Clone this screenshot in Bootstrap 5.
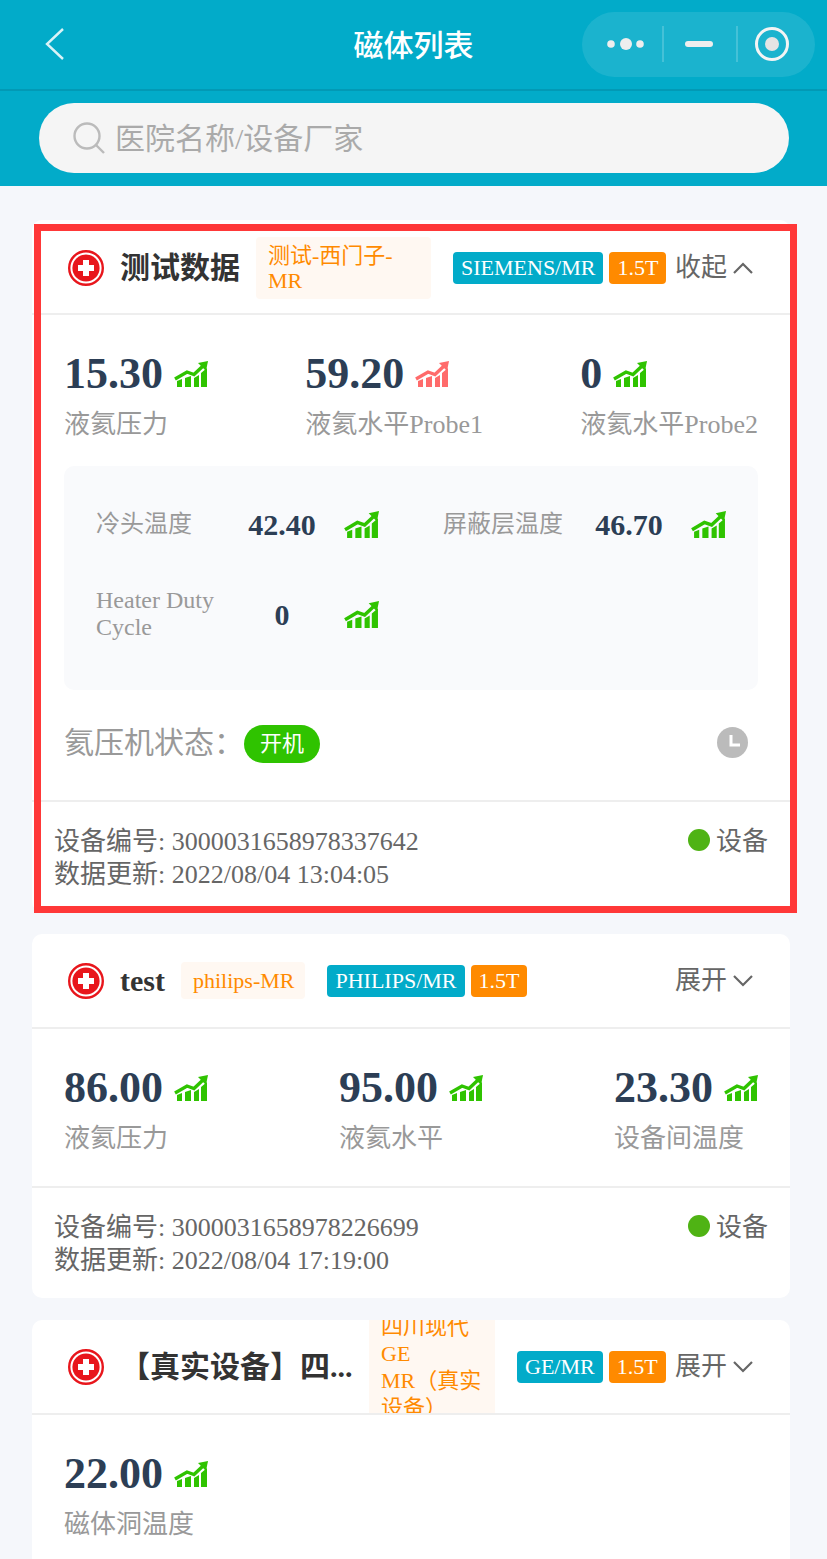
<!DOCTYPE html>
<html lang="zh-CN">
<head>
  <meta charset="UTF-8" />
  <meta name="viewport" content="width=device-width, initial-scale=1" />
  <title>磁体列表</title>
  <link href="https://cdn.jsdelivr.net/npm/bootstrap@5.3.2/dist/css/bootstrap.min.css" rel="stylesheet" />
  <style>
    html, body { height: 1559px; overflow: hidden; }
    body { background: #f5f7fb; font-family: "Liberation Serif", "Noto Sans CJK SC", serif; color: #333; position: relative; }
    .top-bar { height: 91px; background: #02abc9; border-bottom: 2px solid #0299b5; position: relative; }
    .top-title { color: #fff; font-size: 30px; line-height: 40px; font-weight: 500; padding-top: 26px; text-align: center; }
    .back-ico { position: absolute; left: 44px; top: 27px; }
    .capsule { position: absolute; left: 582px; top: 12px; width: 233px; height: 65px; border-radius: 33px; background: rgba(255,255,255,.1); }
    .search-band { background: #02abc9; height: 95px; padding: 12px 38px 0 39px; }
    .search-pill { height: 70px; background: #f5f5f5; border-radius: 35px; padding-left: 34px; gap: 10px; color: #aaa; font-size: 30px; }
    .list-wrap { padding: 34px 37px 0 32px; }
    .mag-card { background: #fff; border-radius: 10px; margin-bottom: 22px; }
    .mag-head { height: 95px; border-bottom: 2px solid #eee; padding: 0 37px 0 36px; overflow: hidden; }
    .head-first { padding-top: 2px; }
    .med-ico { width: 36px; height: 36px; flex: none; margin-right: 16px; }
    .mag-title { font-size: 30px; font-weight: 700; line-height: 40px; margin-right: 16px; flex: none; color: #333; white-space: nowrap; }
    .mag-title.cut { width: 233px; }
    .mag-tag { background: #fff8f2; color: #ff8a00; font-size: 22px; line-height: 25px; padding: 6px 11px 6px 12px; border-radius: 4px; flex: none; margin-right: 22px; }
    .tag-wide { width: 175px; }
    .tag-tall { width: 126px; line-height: 27px; padding-top: 0; padding-bottom: 0; }
    .type-pill { color: #fff; font-size: 22px; line-height: 32px; padding: 0 8px; border-radius: 4px; flex: none; }
    .type-blue { background: #02abc9; margin-right: 6px; }
    .type-orange { background: #ff8a00; }
    .fold-btn { color: #666; font-size: 26px; line-height: 34px; margin-left: auto; gap: 6px; flex: none; }
    .metrics { padding: 32px 32px 29px; }
    .metric-val { font-size: 44px; font-weight: 700; line-height: 54px; color: #2c3e55; gap: 11px; }
    .metric-lbl { font-size: 26px; line-height: 36px; color: #999; margin-top: 6px; }
    .trend-ok { color: #2fc300; flex: none; }
    .trend-warn { color: #ff6b6b; flex: none; }
    .sub-box { margin: -6px 32px 0; background: #f9fafc; border-radius: 10px; padding: 13px 0 31px 32px; display: grid; grid-template-columns: 347px 314px; grid-auto-rows: 90px; }
    .sub-lbl { width: 130px; font-size: 24px; line-height: 27px; color: #999; flex: none; }
    .sub-val { width: 112px; text-align: center; font-size: 30px; font-weight: 700; color: #2c3e55; flex: none; }
    .sub-ico { margin-left: 6px; }
    .state-row { height: 110px; padding: 0 42px 6px 32px; font-size: 30px; color: #999; }
    .state-pill { background: #2fc300; color: #fff; font-size: 22px; line-height: 38px; width: 76px; border-radius: 19px; text-align: center; margin-top: 4px; }
    .mag-foot { border-top: 2px solid #eee; padding: 23px 22px 21px; font-size: 26px; line-height: 33px; color: #666; }
    .dot-on { width: 22px; height: 22px; border-radius: 50%; background: #4fb314; flex: none; margin-top: 4px; }
    .dev-state { gap: 6px; }
    .red-frame { position: absolute; left: 34px; top: 224px; width: 763px; height: 689px; border: 7px solid #ff3838; pointer-events: none; }
  </style>
</head>
<body>
  <svg width="0" height="0" class="d-block position-absolute">
    <defs>
      <symbol id="trend" viewBox="0 0 34 26">
        <path d="M1 18 L13 11 L20 13.5 L29 5" fill="none" stroke="currentColor" stroke-width="3.4"/>
        <path d="M24 2 L34 0 L32 10 Z" fill="currentColor"/>
        <path d="M3 26 V20 L8 18 V26 Z M11 26 V17 L17 15 V26 Z M20 26 V17 L25 14 V26 Z M27 26 V12 L33 7 V26 Z" fill="currentColor"/>
      </symbol>
      <symbol id="med" viewBox="0 0 36 36">
        <circle cx="18" cy="18" r="16.8" fill="none" stroke="#e8161c" stroke-width="2.4"/>
        <circle cx="18" cy="18" r="13.6" fill="#e8161c"/>
        <path d="M15 10 H21 V15 H26 V21 H21 V26 H15 V21 H10 V15 H15 Z" fill="#fff"/>
      </symbol>
    </defs>
  </svg>

  <div class="top-bar">
    <svg class="back-ico" width="22" height="34" viewBox="0 0 22 34"><path d="M19 2 L3 17 L19 32" fill="none" stroke="#fff" stroke-opacity=".85" stroke-width="2.4"/></svg>
    <div class="top-title">磁体列表</div>
    <div class="capsule">
      <svg width="233" height="65" viewBox="0 0 233 65">
        <circle cx="29" cy="32" r="3.8" fill="#eee"/><circle cx="44" cy="32" r="6" fill="#eee"/><circle cx="58" cy="32" r="3.8" fill="#eee"/>
        <path d="M81 14 V50 M155 14 V50" stroke="#fff" stroke-opacity=".25" stroke-width="1.5"/>
        <rect x="103" y="29" width="28" height="6" rx="3" fill="#eee"/>
        <circle cx="190" cy="32" r="15.5" fill="none" stroke="#f4f4f4" stroke-width="3"/><circle cx="190" cy="32" r="7" fill="#e4e4e4"/>
      </svg>
    </div>
  </div>
  <div class="search-band">
    <div class="search-pill d-flex align-items-center">
      <svg width="32" height="32" viewBox="0 0 32 32"><circle cx="14" cy="14" r="12.5" fill="none" stroke="#bbb" stroke-width="2.4"/><path d="M23 23 L31 31" stroke="#bbb" stroke-width="2.4"/></svg>
      <span>医院名称/设备厂家</span>
    </div>
  </div>

  <div class="list-wrap">
    <div class="mag-card">
      <div class="mag-head head-first d-flex align-items-center">
        <svg class="med-ico"><use href="#med"/></svg>
        <div class="mag-title">测试数据</div>
        <div class="mag-tag tag-wide">测试-西门子-MR</div>
        <div class="type-pill type-blue">SIEMENS/MR</div>
        <div class="type-pill type-orange">1.5T</div>
        <div class="fold-btn d-flex align-items-center">收起
          <svg width="20" height="12" viewBox="0 0 20 12"><path d="M1 11 L10 2 L19 11" fill="none" stroke="#666" stroke-width="2.2"/></svg>
        </div>
      </div>
      <div class="metrics d-flex justify-content-between">
        <div>
          <div class="metric-val d-flex align-items-center">15.30 <svg class="trend-ok" width="34" height="26"><use href="#trend"/></svg></div>
          <div class="metric-lbl">液氦压力</div>
        </div>
        <div>
          <div class="metric-val d-flex align-items-center">59.20 <svg class="trend-warn" width="34" height="26"><use href="#trend"/></svg></div>
          <div class="metric-lbl">液氦水平Probe1</div>
        </div>
        <div>
          <div class="metric-val d-flex align-items-center">0 <svg class="trend-ok" width="34" height="26"><use href="#trend"/></svg></div>
          <div class="metric-lbl">液氦水平Probe2</div>
        </div>
      </div>
      <div class="sub-box">
        <div class="d-flex align-items-center">
          <div class="sub-lbl">冷头温度</div><div class="sub-val">42.40</div>
          <svg class="sub-ico trend-ok" width="35" height="27"><use href="#trend"/></svg>
        </div>
        <div class="d-flex align-items-center">
          <div class="sub-lbl">屏蔽层温度</div><div class="sub-val">46.70</div>
          <svg class="sub-ico trend-ok" width="35" height="27"><use href="#trend"/></svg>
        </div>
        <div class="d-flex align-items-center">
          <div class="sub-lbl">Heater Duty Cycle</div><div class="sub-val">0</div>
          <svg class="sub-ico trend-ok" width="35" height="27"><use href="#trend"/></svg>
        </div>
      </div>
      <div class="state-row d-flex align-items-center">
        <span>氦压机状态：</span>
        <div class="state-pill">开机</div>
        <svg class="ms-auto" width="31" height="31" viewBox="0 0 31 31"><circle cx="15.5" cy="15.5" r="15.5" fill="#bbb"/><path d="M14 8 V18 H23" fill="none" stroke="#fff" stroke-width="3"/></svg>
      </div>
      <div class="mag-foot d-flex justify-content-between">
        <div>设备编号: 3000031658978337642<br>数据更新: 2022/08/04 13:04:05</div>
        <div class="dev-state d-flex align-items-start"><span class="dot-on"></span><span>设备</span></div>
      </div>
    </div>

    <div class="mag-card">
      <div class="mag-head d-flex align-items-center">
        <svg class="med-ico"><use href="#med"/></svg>
        <div class="mag-title">test</div>
        <div class="mag-tag">philips-MR</div>
        <div class="type-pill type-blue">PHILIPS/MR</div>
        <div class="type-pill type-orange">1.5T</div>
        <div class="fold-btn d-flex align-items-center">展开
          <svg width="20" height="12" viewBox="0 0 20 12"><path d="M1 1 L10 10 L19 1" fill="none" stroke="#666" stroke-width="2.2"/></svg>
        </div>
      </div>
      <div class="metrics d-flex justify-content-between">
        <div>
          <div class="metric-val d-flex align-items-center">86.00 <svg class="trend-ok" width="34" height="26"><use href="#trend"/></svg></div>
          <div class="metric-lbl">液氦压力</div>
        </div>
        <div>
          <div class="metric-val d-flex align-items-center">95.00 <svg class="trend-ok" width="34" height="26"><use href="#trend"/></svg></div>
          <div class="metric-lbl">液氦水平</div>
        </div>
        <div>
          <div class="metric-val d-flex align-items-center">23.30 <svg class="trend-ok" width="34" height="26"><use href="#trend"/></svg></div>
          <div class="metric-lbl">设备间温度</div>
        </div>
      </div>
      <div class="mag-foot d-flex justify-content-between">
        <div>设备编号: 3000031658978226699<br>数据更新: 2022/08/04 17:19:00</div>
        <div class="dev-state d-flex align-items-start"><span class="dot-on"></span><span>设备</span></div>
      </div>
    </div>

    <div class="mag-card">
      <div class="mag-head d-flex align-items-center">
        <svg class="med-ico"><use href="#med"/></svg>
        <div class="mag-title cut">【真实设备】四...</div>
        <div class="mag-tag tag-tall">四川现代<br>GE<br>MR（真实设备）</div>
        <div class="type-pill type-blue">GE/MR</div>
        <div class="type-pill type-orange">1.5T</div>
        <div class="fold-btn d-flex align-items-center">展开
          <svg width="20" height="12" viewBox="0 0 20 12"><path d="M1 1 L10 10 L19 1" fill="none" stroke="#666" stroke-width="2.2"/></svg>
        </div>
      </div>
      <div class="metrics d-flex justify-content-between">
        <div>
          <div class="metric-val d-flex align-items-center">22.00 <svg class="trend-ok" width="34" height="26"><use href="#trend"/></svg></div>
          <div class="metric-lbl">磁体洞温度</div>
        </div>
      </div>
    </div>
  </div>

  <div class="red-frame"></div>
  <script src="https://cdn.jsdelivr.net/npm/bootstrap@5.3.2/dist/js/bootstrap.bundle.min.js"></script>
</body>
</html>
